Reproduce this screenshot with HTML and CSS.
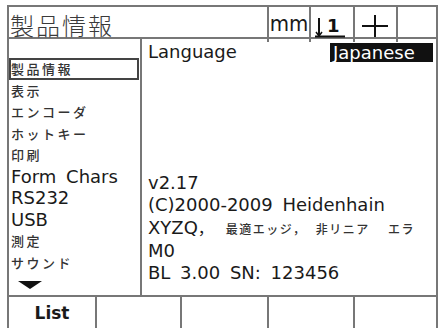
FILE: index.html
```html
<!DOCTYPE html>
<html lang="ja">
<head>
  <meta charset="UTF-8">
  <title>製品情報</title>
  <link rel="stylesheet" href="styles.css">
</head>
<body>
  <div class="screen">
    <!-- 상단 바 -->
    <div class="topbar">
      <div class="title">製品情報</div>
      <div class="cell unit">mm</div>
      <div class="cell">
        <svg class="ico" width="42" height="30" viewBox="0 0 42 30">
          <line x1="8" y1="8" x2="8" y2="26" stroke="#111" stroke-width="2"/>
          <polyline points="5,22 8,26 11,22" fill="none" stroke="#111" stroke-width="1.5"/>
          <line x1="4" y1="26.5" x2="34" y2="26.5" stroke="#111" stroke-width="2"/>
          <text x="16" y="22" font-family="DejaVu Sans" font-size="18" font-weight="bold" fill="#111">1</text>
        </svg>
      </div>
      <div class="cell">
        <svg class="ico" width="41" height="30" viewBox="0 0 41 30">
          <line x1="7" y1="16" x2="33" y2="16" stroke="#111" stroke-width="2"/>
          <line x1="20" y1="5" x2="20" y2="27" stroke="#111" stroke-width="2"/>
        </svg>
      </div>
      <div class="cell last"></div>
    </div>

    <!-- 본문 -->
    <div class="main">
      <ul class="menu">
        <li class="jp sel">製品情報</li>
        <li class="jp">表示</li>
        <li class="jp">エンコーダ</li>
        <li class="jp">ホットキー</li>
        <li class="jp">印刷</li>
        <li>Form Chars</li>
        <li>RS232</li>
        <li>USB</li>
        <li class="jp">測定</li>
        <li class="jp">サウンド</li>
        <li class="more"><span class="arrow"></span></li>
      </ul>
      <div class="info">
        <div class="lang-row">
          <span>Language</span>
          <span class="lang-value">Japanese</span>
        </div>
        <div class="about">
          <div>v2.17</div>
          <div>(C)2000-2009 Heidenhain</div>
          <div>XYZQ<span class="jp-comma">，</span><span class="jp-small">最適エッジ， 非リニア&nbsp; エラ</span></div>
          <div>M0</div>
          <div>BL 3.00 SN: 123456</div>
        </div>
      </div>
    </div>

    <!-- 소프트키 -->
    <div class="softkeys">
      <div class="key">List</div>
      <div class="key"></div>
      <div class="key"></div>
      <div class="key"></div>
      <div class="key last"></div>
    </div>
  </div>
</body>
</html>
```

FILE: styles.css
```css
/* 기본 리셋 */
body {
  margin: 0;
  background: #fff;
  color: #1a1a1a;
  font-family: "DejaVu Sans", "Noto Sans CJK JP", sans-serif;
}
* { box-sizing: border-box; }

.screen {
  margin: 5px 0 0 7px;
  width: 431px;
}

/* === 상단 바 === */
.topbar {
  display: grid;
  grid-template-columns: 260px 42px 44px 43px 42px;
  height: 34px;
  border-top: 2px solid #777;
  border-bottom: 2px solid #777;
}
.topbar .title,
.topbar .cell {
  border-left: 2px solid #777;
  display: flex;
  align-items: center;
}
.topbar .last { border-right: 2px solid #777; }
.title {
  padding-left: 1px;
  font-family: "Noto Sans CJK JP", sans-serif;
  font-size: 24px;
  font-weight: 300;
  letter-spacing: 2px;
  color: #3a3a3a;
}
.unit {
  justify-content: center;
  font-family: "DejaVu Sans Condensed", "DejaVu Sans", sans-serif;
  font-size: 22px;
  padding-bottom: 3px;
}
.ico { display: block; }

/* === 본문 === */
.main {
  display: flex;
  height: 256px;
}
.menu {
  width: 135px;
  margin: 0;
  padding: 19px 0 0;
  list-style: none;
  border-left: 2px solid #777;
  border-right: 2px solid #777;
}
.menu li {
  height: 21.5px;
  line-height: 21.5px;
  padding-left: 2px;
  font-size: 18px;
  word-spacing: 4px;
  white-space: nowrap;
}
.menu li.jp {
  font-family: "Noto Sans CJK JP", sans-serif;
  font-size: 13px;
  font-weight: 500;
  letter-spacing: 2.5px;
  color: #333;
}
.menu li.sel {
  border: 2px solid #444;
  margin-right: 1px;
  padding-left: 0;
  line-height: 17.5px;
}
.menu li.more { padding-left: 9px; }
.arrow {
  display: inline-block;
  vertical-align: middle;
  border-left: 12px solid transparent;
  border-right: 12px solid transparent;
  border-top: 8px solid #111;
}

.info {
  flex: 1;
  display: flex;
  flex-direction: column;
  padding: 4px 3px 11px 6px;
  border-right: 2px solid #777;
  font-size: 18px;
  overflow: hidden;
  white-space: nowrap;
}
.lang-row {
  display: flex;
  justify-content: space-between;
  height: 19px;
  line-height: 17px;
}
.lang-value {
  width: 103px;
  padding-left: 3px;
  background: #111;
  color: #fff;
  line-height: 19px;
}
.about {
  margin-top: auto;
  line-height: 22px;
  word-spacing: 4px;
}
.jp-comma {
  font-family: "Noto Sans CJK JP", sans-serif;
  font-size: 16px;
  margin-right: 12px;
}
.jp-small {
  font-family: "Noto Sans CJK JP", sans-serif;
  font-size: 12px;
  font-weight: 500;
  letter-spacing: 1.5px;
  word-spacing: 5px;
  color: #333;
}

/* === 소프트키 === */
.softkeys {
  display: grid;
  grid-template-columns: 88px 85px 87px 86px 85px;
  height: 40px;
  border-top: 2px solid #777;
}
.key {
  border-left: 2px solid #777;
  padding-top: 6px;
  text-align: center;
  font-size: 17px;
  font-weight: bold;
}
.key.last { border-right: 2px solid #777; }
```
